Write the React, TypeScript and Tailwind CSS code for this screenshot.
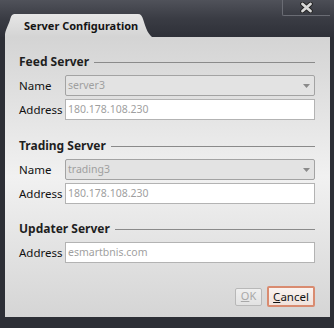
const Field = ({
  label,
  value,
  select,
}: {
  label: string;
  value: string;
  select?: boolean;
}) => (
  <div className="flex flex-row items-center h-[21px]">
    <div className="w-[46px] shrink-0 text-[11.5px] text-[#111] leading-none">
      {label}
    </div>
    {select ? (
      <div className="flex-1 h-full flex items-center justify-between pl-[2px] pr-[4px] bg-[#e3e3e3] border border-[#a3a3a3] rounded-[2px]">
        <span className="text-[10.5px] text-[#9f9f9f]">{value}</span>
        <svg width="7" height="4" viewBox="0 0 7 4">
          <path d="M0 0 L7 0 L3.5 4 Z" fill="#8a8a8a" />
        </svg>
      </div>
    ) : (
      <div className="flex-1 h-full flex items-center pl-[2px] bg-white border border-[#b3b3b3]">
        <span className="text-[10.5px] text-[#9f9f9f]">{value}</span>
      </div>
    )}
  </div>
);

const SectionTitle = ({ title }: { title: string }) => (
  <div className="flex flex-row items-center gap-[5px] h-[16px]">
    <span className="text-[12px] font-bold text-[#1f1f1f] leading-[16px]">
      {title}
    </span>
    <div className="flex-1 h-px bg-[#8a8a8a] mt-[1px]" />
  </div>
);

export default function App() {
  return (
    <div
      className="w-[334px] h-[328px] bg-[#2d2f36] flex flex-col"
      style={{ fontFamily: '"Noto Sans", "Open Sans", sans-serif' }}
    >
      <div className="relative h-[37px] shrink-0 flex items-end pl-[5px] bg-gradient-to-b from-[#50525a] via-[#3a3c44] to-[#2e3038]">
        <div className="relative w-[147px] h-[23px]">
          <svg
            className="absolute inset-0"
            width="147"
            height="23"
            viewBox="0 0 147 23"
          >
            <defs>
              <linearGradient id="tabg" x1="0" y1="0" x2="0" y2="1">
                <stop offset="0" stopColor="#e6e6e6" />
                <stop offset="1" stopColor="#d4d4d4" />
              </linearGradient>
            </defs>
            <path
              d="M0 23 L0 21 C0 17 3 12 5 6 C6 2 7 0 10 0 L133 0 C136 0 137 2 138 5 C140 11 142 19 147 23 Z"
              fill="url(#tabg)"
            />
          </svg>
          <div className="relative pl-[19px] pt-[5px] text-[11px] font-bold text-[#141414] leading-[14px]">
            Server Configuration
          </div>
        </div>
        <div className="absolute top-0 right-[4px] w-[48px] h-[16px] border-l border-b border-[#6a6c74] rounded-bl-[2px] flex items-center justify-center bg-gradient-to-b from-[#4c4e56] to-[#3a3c44]">
          <svg width="13" height="11" viewBox="0 0 13 11">
            <path
              d="M2.5 2 L10.5 9 M10.5 2 L2.5 9"
              stroke="#222"
              strokeWidth="4.6"
              strokeLinecap="round"
            />
            <path
              d="M2.5 2 L10.5 9 M10.5 2 L2.5 9"
              stroke="#d8d8d8"
              strokeWidth="2.8"
              strokeLinecap="round"
            />
          </svg>
        </div>
      </div>

      <div className="flex-1 ml-[5px] mr-[4px] mb-[11px] bg-gradient-to-b from-[#d4d4d4] via-[#f1f1f1] to-[#d5d5d5] pl-[14px] pr-[15px] pt-[17px] flex flex-col">
        <SectionTitle title="Feed Server" />
        <div className="flex flex-col gap-[3px] mt-[5px]">
          <Field label="Name" value="server3" select />
          <Field label="Address" value="180.178.108.230" />
        </div>

        <div className="mt-[18px]">
          <SectionTitle title="Trading Server" />
        </div>
        <div className="flex flex-col gap-[3px] mt-[5px]">
          <Field label="Name" value="trading3" select />
          <Field label="Address" value="180.178.108.230" />
        </div>

        <div className="mt-[17px]">
          <SectionTitle title="Updater Server" />
        </div>
        <div className="flex flex-col gap-[3px] mt-[5px]">
          <Field label="Address" value="esmartbnis.com" />
        </div>

        <div className="flex flex-row justify-end items-center gap-[5px] mt-[23px]">
          <div className="w-[27px] h-[18px] flex items-center justify-center border border-[#b8b8b8] rounded-[2px] bg-gradient-to-b from-[#efefef] to-[#e2e2e2] text-[11px] text-[#a8a8a8]">
            <span>
              <span className="underline">O</span>K
            </span>
          </div>
          <div className="w-[48px] h-[21px] flex items-center justify-center border-[2px] border-[#d98b70] rounded-[2px] bg-gradient-to-b from-[#faf3f0] to-[#f0e2dc] text-[11.5px] text-[#111]">
            <span>
              <span className="underline">C</span>ancel
            </span>
          </div>
        </div>
      </div>
    </div>
  );
}
